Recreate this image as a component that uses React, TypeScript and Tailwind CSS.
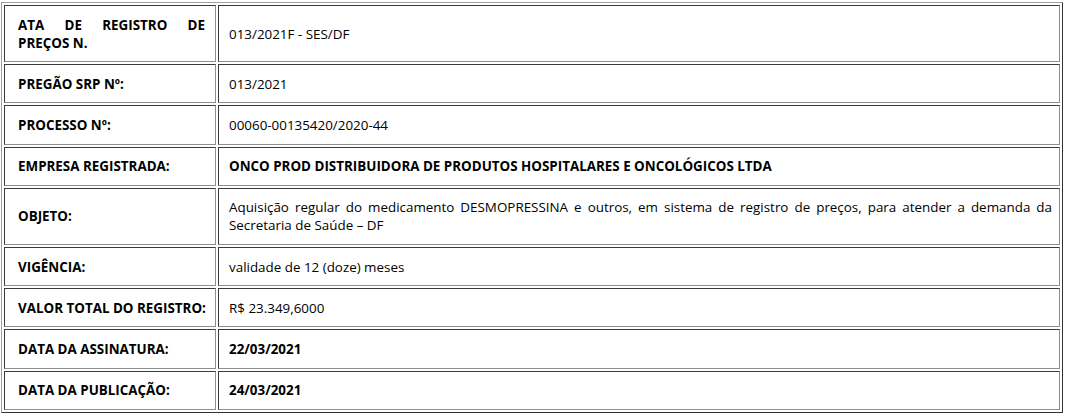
import React from "react";

const rows: { label: string; value: string; boldValue?: boolean; justifyLabel?: boolean; justifyValue?: boolean }[] = [
  { label: "ATA DE REGISTRO DE PREÇOS N.", value: "013/2021F - SES/DF", justifyLabel: true },
  { label: "PREGÃO SRP Nº:", value: "013/2021" },
  { label: "PROCESSO Nº:", value: "00060-00135420/2020-44" },
  { label: "EMPRESA REGISTRADA:", value: "ONCO PROD DISTRIBUIDORA DE PRODUTOS HOSPITALARES E ONCOLÓGICOS LTDA", boldValue: true },
  {
    label: "OBJETO:",
    value:
      "Aquisição regular do medicamento DESMOPRESSINA e outros, em sistema de registro de preços, para atender a demanda da Secretaria de Saúde – DF",
    justifyValue: true,
  },
  { label: "VIGÊNCIA:", value: "validade de 12 (doze) meses" },
  { label: "VALOR TOTAL DO REGISTRO:", value: "R$ 23.349,6000" },
  { label: "DATA DA ASSINATURA:", value: "22/03/2021", boldValue: true },
  { label: "DATA DA PUBLICAÇÃO:", value: "24/03/2021", boldValue: true },
];

export default function App() {
  return (
    <div className="bg-white w-[1067px] h-[417px] pt-[2px] pl-[1px] font-['Open_Sans',sans-serif] text-[13.4px] leading-[18px] text-black">
      <table className="w-[1062px] table-fixed border-separate border-spacing-[2px] border border-t-[#a0a0a0] border-l-[#a0a0a0] border-r-[#333] border-b-[#333]">
        <colgroup>
          <col className="w-[212px]" />
          <col />
        </colgroup>
        <tbody>
          {rows.map((r, i) => (
            <tr key={i}>
              <td className="align-middle py-[9.6px] pl-[13px] pr-[10px] font-bold text-left whitespace-nowrap border border-t-[#3a3a3a] border-l-[#3a3a3a] border-r-[#8f8f8f] border-b-[#8f8f8f]">
                {r.justifyLabel ? (
                  <>
                    <span className="flex justify-between">
                      <span>ATA</span>
                      <span>DE</span>
                      <span>REGISTRO</span>
                      <span>DE</span>
                    </span>
                    <span className="block">PREÇOS N.</span>
                  </>
                ) : (
                  r.label
                )}
              </td>
              <td
                className={`align-middle py-[9.6px] pl-[10px] pr-[7px] border border-t-[#3a3a3a] border-l-[#3a3a3a] border-r-[#8f8f8f] border-b-[#8f8f8f] ${
                  r.boldValue ? "font-bold" : ""
                } ${r.justifyValue ? "text-justify" : "text-left"}`}
              >
                {r.value}
              </td>
            </tr>
          ))}
        </tbody>
      </table>
    </div>
  );
}
